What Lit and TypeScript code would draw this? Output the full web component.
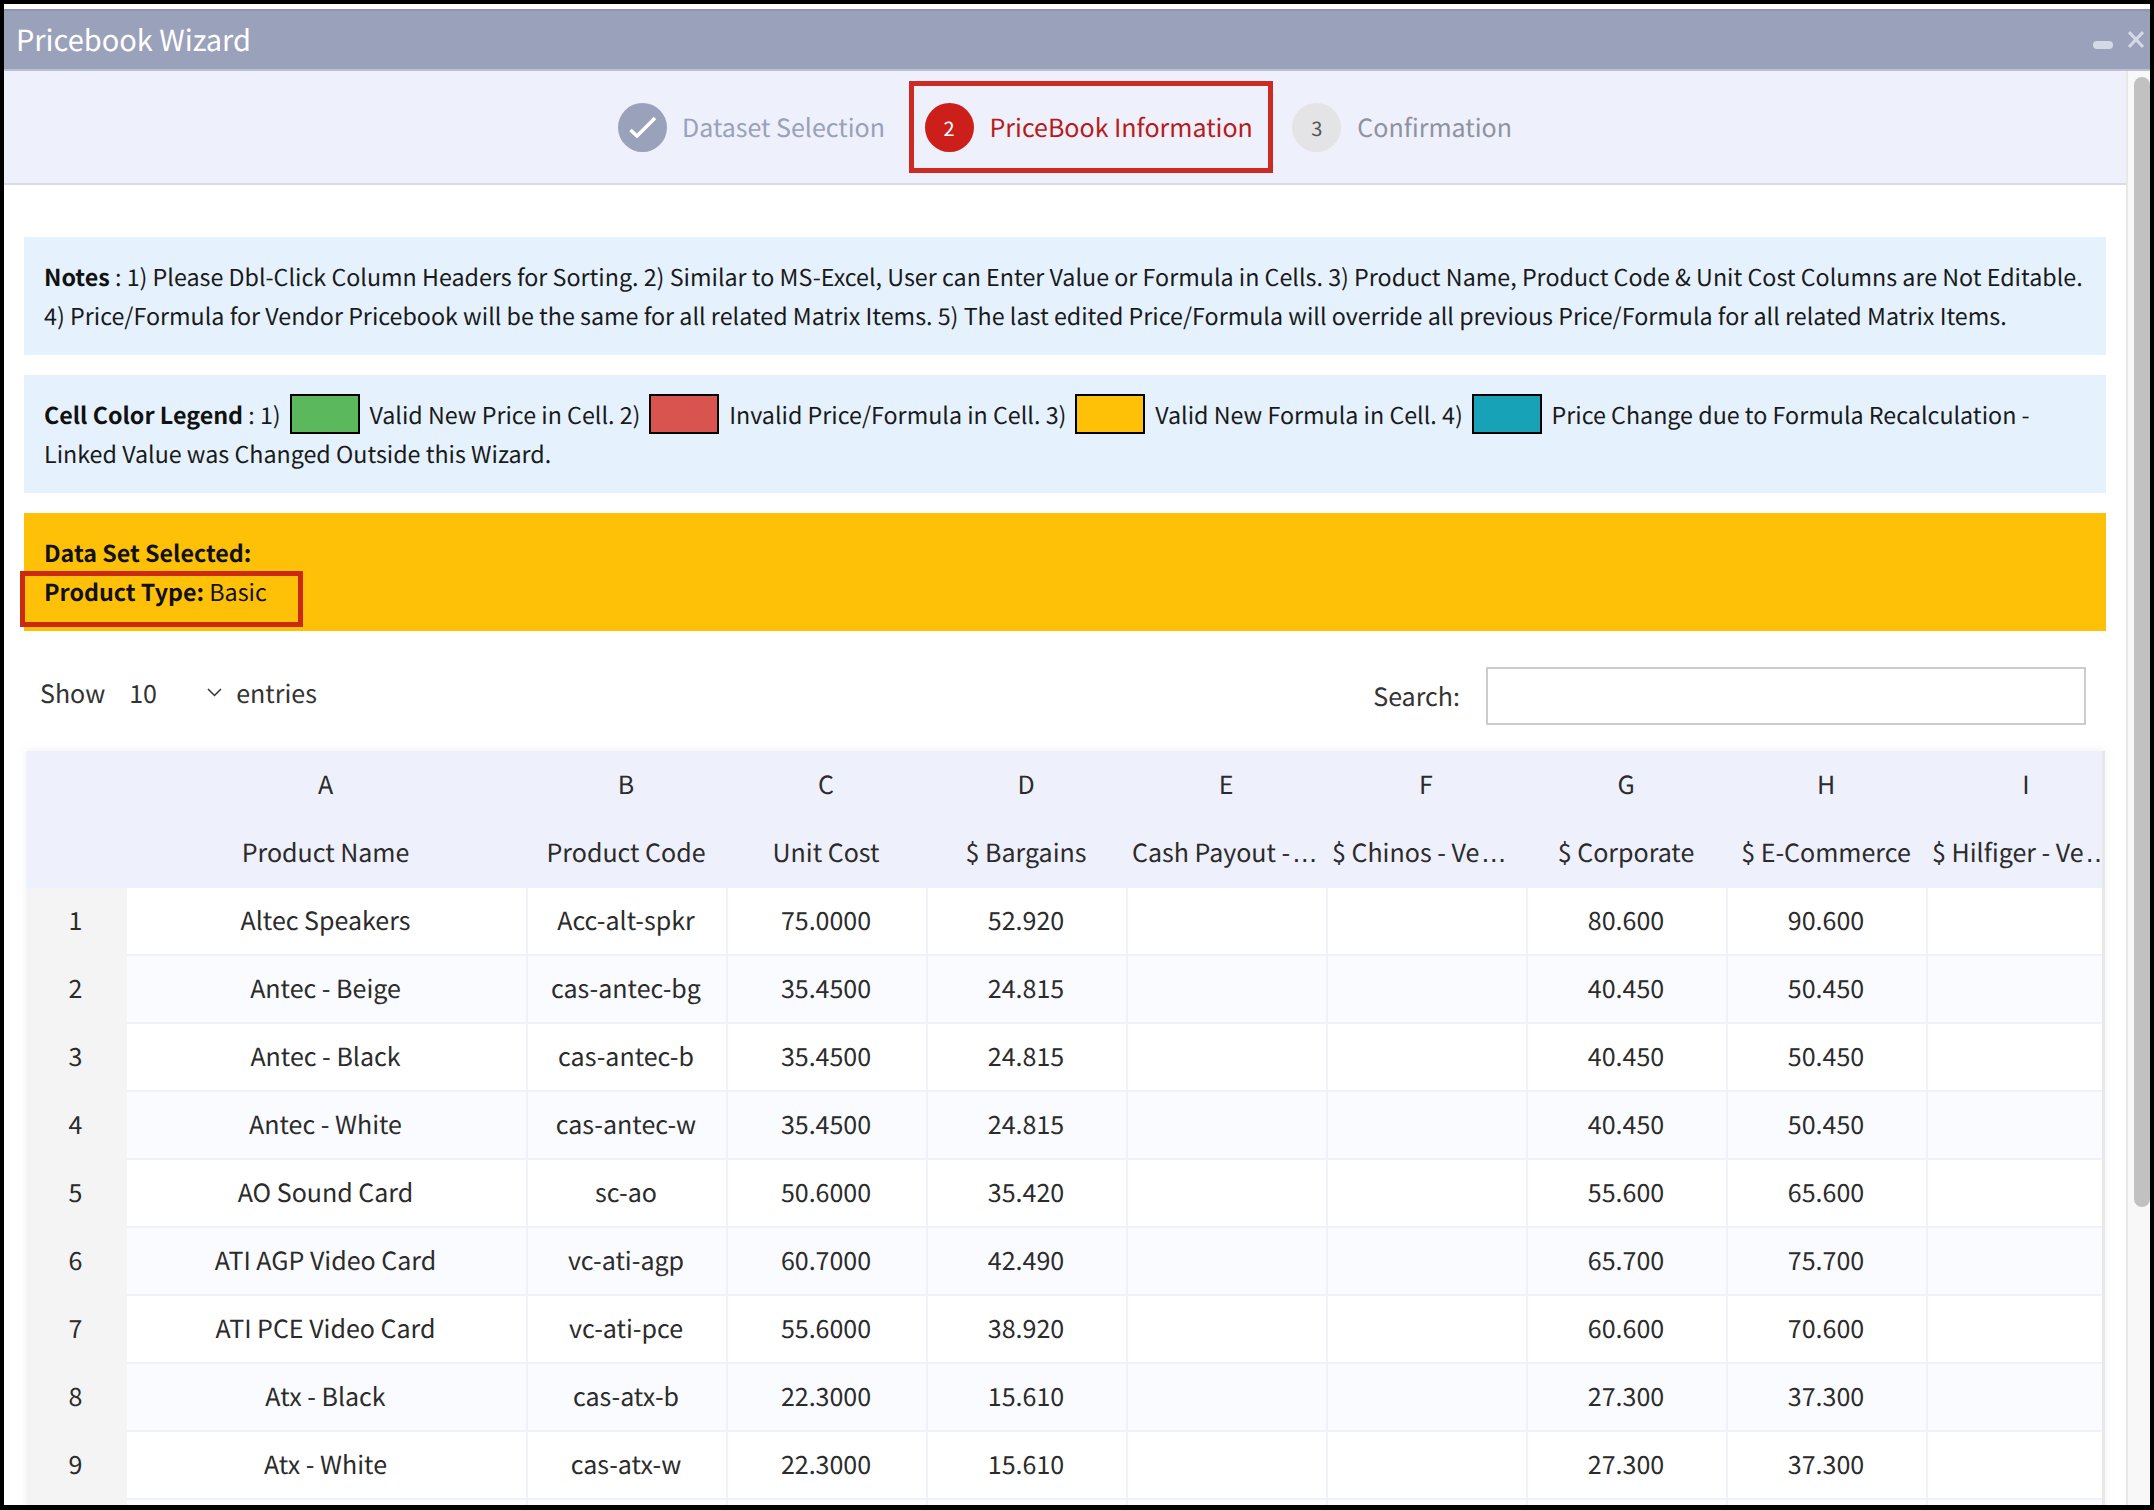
import { LitElement, html, css } from "lit";
import { customElement } from "lit/decorators.js";

const rows: [string, string, string, string, string, string][] = [
  ["Altec Speakers", "Acc-alt-spkr", "75.0000", "52.920", "80.600", "90.600"],
  ["Antec - Beige", "cas-antec-bg", "35.4500", "24.815", "40.450", "50.450"],
  ["Antec - Black", "cas-antec-b", "35.4500", "24.815", "40.450", "50.450"],
  ["Antec - White", "cas-antec-w", "35.4500", "24.815", "40.450", "50.450"],
  ["AO Sound Card", "sc-ao", "50.6000", "35.420", "55.600", "65.600"],
  ["ATI AGP Video Card", "vc-ati-agp", "60.7000", "42.490", "65.700", "75.700"],
  ["ATI PCE Video Card", "vc-ati-pce", "55.6000", "38.920", "60.600", "70.600"],
  ["Atx - Black", "cas-atx-b", "22.3000", "15.610", "27.300", "37.300"],
  ["Atx - White", "cas-atx-w", "22.3000", "15.610", "27.300", "37.300"],
  ["", "", "", "", "", ""],
];
const letters = ["A", "B", "C", "D", "E", "F", "G", "H", "I"];
const names: [string, boolean][] = [
  ["Product Name", false],
  ["Product Code", false],
  ["Unit Cost", false],
  ["$ Bargains", false],
  ["Cash Payout -", true],
  ["$ Chinos - Ve", true],
  ["$ Corporate", false],
  ["$ E-Commerce", false],
  ["$ Hilfiger - Ve", true],
];

@customElement("app-root")
export class AppRoot extends LitElement {
  static styles = css`
    :host {
      display: block;
      width: 2154px;
      height: 1510px;
      box-sizing: border-box;
      padding: 4px 4px 5px 4px;
      background: #000;
      overflow: hidden;
      font-family: "Noto Sans CJK KR", "Noto Sans", sans-serif;
      font-size: 25px;
      color: #212529;
      text-rendering: geometricPrecision;
    }
    .window { height: 100%; background: #fff; display: flex; flex-direction: column; overflow: hidden; }
    .top { height: 5px; background: #fff; flex: none; }
    .title {
      flex: none; height: 62px; box-sizing: border-box; border-bottom: 2px solid #bcc1d2; background: #9aa1ba;
      border-top: 2px solid #8f96b0;
      display: flex; align-items: center; justify-content: space-between; padding: 0 6px 2px 12px;
      color: #fff; font-size: 29px;
    }
    .win-btns { display: flex; align-items: center; gap: 15px; }
    .win-btns svg { display: block; }
    .minus { margin-top: 12px; }
    .body { flex: 1; min-height: 0; display: flex; }
    .main { flex: 1; min-width: 0; overflow: hidden; }
    .track { flex: none; width: 24px; box-sizing: border-box; background: #f8f8f8; border-left: 2px solid #e8e8e8; padding: 6px 0 0 6px; }
    .thumb { height: 1130px; background: #c1c1c1; border-radius: 8px; }
    .stepper {
      height: 112px; background: #eef0fb; border-bottom: 2px solid #d9dbe3; padding-left: 4px;
      display: flex; align-items: center; justify-content: center; gap: 1.5px;
    }
    .step {
      height: 92px; box-sizing: border-box; border: 5px solid transparent; padding: 0 15px 0 11px;
      display: flex; align-items: center; gap: 16px; color: #9aa1ba; white-space: nowrap;
    }
    .step.done { gap: 15px; padding-right: 17px; }
    .step.active { border-color: #cc2a22; color: #b71c1c; }
    .step.todo { color: #8f939f; gap: 16px; margin-left: 2px; }
    .dot { width: 49px; height: 49px; border-radius: 50%; display: flex; align-items: center; justify-content: center; font-size: 20px; background: #9aa1ba; color: #fff; }
    .active .dot { background: #cc1f1a; }
    .todo .dot { background: #e4e4e6; color: #555; }
    .content { padding: 52px 20px 0 20px; }
    .box { padding: 20px 15px 20px 20px; line-height: 39px; font-size: 23.27px; background: #e5f2fe; margin-bottom: 20px; color: #1a1a1a; }
    .box b { font-weight: 700; color: #111; }
    .swatch { display: inline-block; width: 70px; height: 40px; box-sizing: border-box; border: 2px solid #000; vertical-align: -4px; margin: -6px 4.500px -6px 3.800px; }
    .green { background: #5cb85c; } .red { background: #d9534f; } .yellow { background: #ffc107; } .teal { background: #17a2b8; }
    .dataset { background: #ffc107; padding: 20px; line-height: 39px; font-size: 23.27px; color: #111; position: relative; height: 118px; box-sizing: border-box; }
    .dataset b { font-weight: 700; }
    .dataset .mark { position: absolute; left: -4px; top: 58px; width: 283px; height: 56px; box-sizing: border-box; border: 5px solid #cc2a10; }
    .toolbar { margin-top: 36px; height: 58px; display: flex; align-items: center; justify-content: space-between; padding: 0 20px 0 16px; color: #333; }
    .length { display: flex; align-items: center; padding-bottom: 7px; }
    .sel { display: flex; flex: none; align-items: center; justify-content: space-between; width: 131px; padding: 0 14px 0 24px; box-sizing: border-box; }
    .sel svg { flex: none; }
    .search { display: flex; align-items: center; gap: 26px; }
    .input { width: 600px; height: 58px; box-sizing: border-box; border: 2px solid #ccc; background: #fff; }
    .table-wrap { margin: 26px 0 0 2px; width: 2079px; box-sizing: border-box; border-right: 3px solid #e8e8e8; overflow: hidden; box-shadow: 0 -2px 6px rgba(240, 230, 230, .5); }
    .grid { display: grid; grid-template-columns: 101px 401px repeat(8, 200px); width: 2102px; }
    .c { height: 68px; box-sizing: border-box; display: block; text-align: center; line-height: 65px; padding: 0 6px 0 4px; overflow: hidden; white-space: nowrap; color: #2b2b2b; border-right: 2px solid #f1f2f9; border-bottom: 2px solid #f1f2f9; }
    .h { background: #eef0fb; border-color: #eef0fb; height: 68.5px; }
    .l { line-height: 66px; }
    .n { background: #f4f4f4; border-color: #f4f4f4; padding: 0 5px; }
    .s { background: #fafbfe; }
    .cut { text-align: left; }
    .dots { font-family: "DejaVu Sans", sans-serif; margin-left: 2px; }
  `;

  render() {
    return html`<div class="window">
      <div class="top"></div>
      <div class="title">
        <span>Pricebook Wizard</span>
        <span class="win-btns">
          <svg class="minus" width="20" height="8" viewBox="0 0 20 8"><rect x="0" y="0" width="20" height="8" rx="4" fill="#d5d9e6"/></svg>
          <svg width="16" height="17" viewBox="0 0 16 17"><path d="M1 1l14 15M15 1L1 16" stroke="#d5d9e6" stroke-width="3" fill="none"/></svg>
        </span>
      </div>
      <div class="body">
        <div class="main">
          <div class="stepper">
            <div class="step done"><span class="dot"><svg width="28" height="22" viewBox="0 0 28 22"><path d="M1.5 14L8 20L26 2" stroke="#fff" stroke-width="3.5" fill="none"/></svg></span>Dataset Selection</div>
            <div class="step active"><span class="dot">2</span>PriceBook Information</div>
            <div class="step todo"><span class="dot">3</span>Confirmation</div>
          </div>
          <div class="content">
            <div class="box"><b>Notes</b> : 1) Please Dbl-Click Column Headers for Sorting. 2) Similar to MS-Excel, User can Enter Value or Formula in Cells. 3) Product Name, Product Code &amp; Unit Cost Columns are Not Editable. 4) Price/Formula for Vendor Pricebook will be the same for all related Matrix Items. 5) The last edited Price/Formula will override all previous Price/Formula for all related Matrix Items.</div>
            <div class="box"><b>Cell Color Legend</b> : 1) <span class="swatch green"></span> Valid New Price in Cell. 2) <span class="swatch red"></span> Invalid Price/Formula in Cell. 3) <span class="swatch yellow"></span> Valid New Formula in Cell. 4) <span class="swatch teal"></span> Price Change due to Formula Recalculation - Linked Value was Changed Outside this Wizard.</div>
            <div class="dataset"><b>Data Set Selected:</b><br /><b>Product Type:</b> Basic<span class="mark"></span></div>
            <div class="toolbar">
              <div class="length">Show<span class="sel">10<svg width="15" height="9" viewBox="0 0 15 9"><path d="M1 1l6.500 6.500L14 1" stroke="#333" stroke-width="1.500" fill="none"/></svg></span>entries</div>
              <div class="search">Search:<div class="input"></div></div>
            </div>
            <div class="table-wrap">
              <div class="grid">
                <div class="c h l"></div>
                ${letters.map((l) => html`<div class="c h l">${l}</div>`)}
                <div class="c h"></div>
                ${names.map(([l, cut]) => cut
                  ? html`<div class="c h cut">${l}<span class="dots">…</span></div>`
                  : html`<div class="c h">${l}</div>`)}
                ${rows.map((r, i) => {
                  const s = i % 2 === 1 ? "c s" : "c";
                  return html`<div class="c n">${r[0] ? i + 1 : ""}</div>
                    <div class=${s}>${r[0]}</div><div class=${s}>${r[1]}</div><div class=${s}>${r[2]}</div><div class=${s}>${r[3]}</div>
                    <div class=${s}></div><div class=${s}></div>
                    <div class=${s}>${r[4]}</div><div class=${s}>${r[5]}</div><div class=${s}></div>`;
                })}
              </div>
            </div>
          </div>
        </div>
        <div class="track"><div class="thumb"></div></div>
      </div>
    </div>`;
  }
}
